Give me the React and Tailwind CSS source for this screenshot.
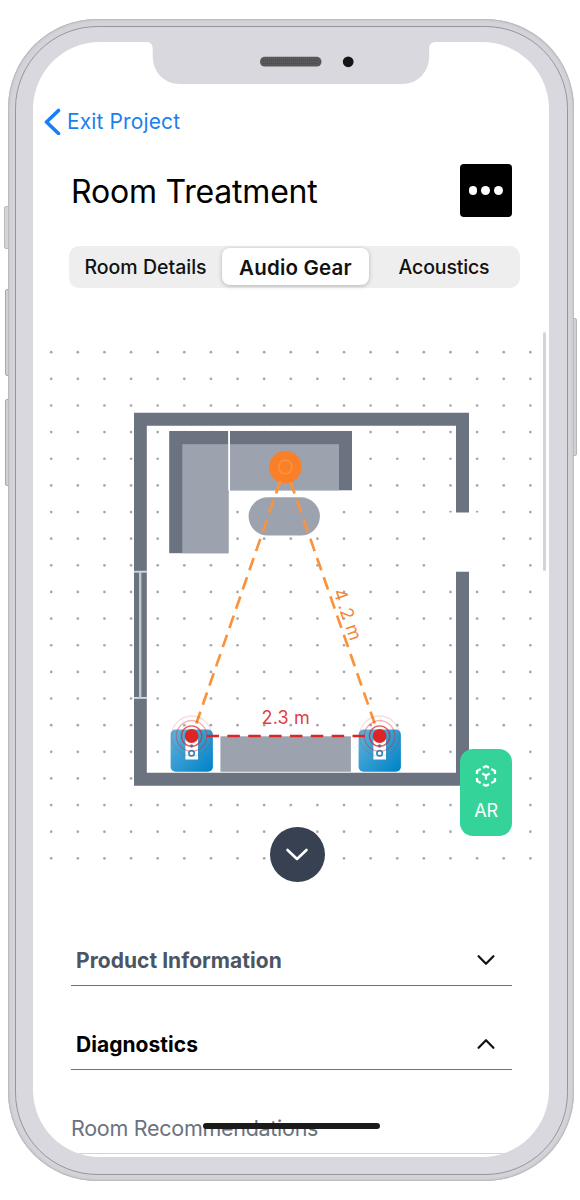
import React from "react";

const COLS = Array.from({ length: 19 }, (_, i) => 51.2 + i * 26.62);
const ROWS = Array.from({ length: 20 }, (_, i) => 352.2 + i * 26.64);

function Chevron({ up, className }) {
  return (
    <svg viewBox="0 0 18 10" className={className} fill="none" stroke="currentColor" strokeWidth="2.200" strokeLinecap="round" strokeLinejoin="round">
      <path d={up ? "M1.600 8.800 9 1.200l7.400 7.600" : "M1.600 1.200 9 8.800l7.400-7.600"} />
    </svg>
  );
}

function Notch() {
  return (
    <svg className="absolute left-[113px] top-0 h-[42px] w-[290px]" viewBox="146 42 290 42">
      <path d="M146 42C150.500 42 152.600 44 152.700 49V56C152.700 72 164 84 180 84H402C418 84 429.200 72 429.200 56V49C429.300 44 431.500 42 436 42Z" fill="#d9d8de" />
      <rect x="260" y="56.800" width="61.500" height="9.800" rx="4.900" fill="#585858" />
      <path d="M263 60.300H318M263 63.300H318" stroke="#484848" strokeWidth="1" strokeDasharray="1 1" />
      <circle cx="348.200" cy="61.800" r="5.400" fill="#151515" />
    </svg>
  );
}

function Speaker({ cx }) {
  return (
    <g>
      <rect x={cx - 21} y="729.500" width="42.300" height="42.300" rx="5" fill="url(#speaker)" />
      <rect x={cx - 6.2} y="736" width="12.600" height="23.500" fill="#fff" />
      <circle cx={cx} cy="746" r="1.700" fill="#4a90bd" />
      <circle cx={cx} cy="753.200" r="2.700" fill="none" stroke="#2b8cc9" strokeWidth="1.700" />
      <g fill="none" stroke="#dc2626">
        <circle cx={cx} cy="736" r="20" strokeOpacity=".16" strokeWidth="1.300" />
        <circle cx={cx} cy="736" r="15.300" strokeOpacity=".38" strokeWidth="1.300" />
        <circle cx={cx} cy="736" r="10.200" strokeOpacity=".75" strokeWidth="1.300" />
      </g>
      <circle cx={cx} cy="736" r="6.900" fill="#dc2626" />
    </g>
  );
}

function FloorPlan() {
  return (
    <svg className="block h-[580px] w-[516px]" viewBox="33 320 516 580">
      <defs>
        <linearGradient id="speaker" x1="0" y1="0" x2="1" y2="1">
          <stop offset=".1" stopColor="#5aaeda" />
          <stop offset=".95" stopColor="#0284c7" />
        </linearGradient>
      </defs>
      {ROWS.map((y) =>
        COLS.map((x) => <circle key={x + "-" + y} cx={x} cy={y} r="1.350" fill="#8a8a8a" fillOpacity=".75" />)
      )}
      <rect x="444" y="512.500" width="46" height="59" fill="#fff" />
      <path d="M456 512.500V425.800H146.800V772.800H456V571.700H469V785.800H134V412.700H469V512.500Z" fill="#6b7280" />
      <g fill="#d5d9df">
        <rect x="134" y="570.800" width="13" height="1.800" />
        <rect x="134" y="697" width="13" height="1.800" />
        <rect x="139" y="572" width="2.400" height="125.500" fill="#c3c7ce" />
      </g>
      <rect x="169.200" y="431" width="59.200" height="122.200" fill="#6b7280" />
      <rect x="182.300" y="444.200" width="46.100" height="109" fill="#9ca3af" />
      <rect x="228.300" y="431" width="1.700" height="59.300" fill="#fff" />
      <rect x="230" y="431" width="122" height="59.300" fill="#6b7280" />
      <rect x="230" y="444.200" width="109" height="46.100" fill="#9ca3af" />
      <rect x="248.600" y="497.300" width="71.300" height="38.300" rx="19.100" fill="#9ca3af" />
      <rect x="220.400" y="736.300" width="130.500" height="35.500" fill="#9ca3af" />
      <circle cx="285.300" cy="467" r="16.300" fill="#f98029" />
      <circle cx="285.300" cy="467" r="6.700" fill="none" stroke="#fb923c" strokeWidth="1.600" />
      <g stroke="#fb923c" strokeWidth="2.700" strokeDasharray="13 7.330">
        <path d="M280.300 481.200 196.300 723.500M290.300 481.200 374.700 723.500" />
      </g>
      <Speaker cx={191.600} />
      <Speaker cx={379.600} />
      <path d="M206.500 736H365" stroke="#dc2626" strokeWidth="2.600" strokeDasharray="12.500 8.360" />
      <text x="261.600" y="724.300" fontSize="18" fill="#dc2626" fontFamily="Inter, sans-serif" fillOpacity=".9" letterSpacing=".15">2.3 m</text>
      <text x="0 15 20.300 30 37.600" y="0" fontSize="18" fill="#f97316" fillOpacity=".9" fontFamily="Inter, sans-serif" transform="translate(333 591.300) rotate(71)">4.2 m</text>
    </svg>
  );
}

function CubeIcon() {
  return (
    <svg className="h-[22px] w-[22px]" viewBox="0 0 22 22" fill="none" stroke="#fff" strokeWidth="2.300" strokeLinejoin="round">
      <path d="M8 2.600 11 1.200l3 1.400M16.300 3.900 20 5.900v3M20 13.100v3l-3.700 2M14 19.400 11 20.800l-3-1.400M5.700 18.100 2 16.100v-3M2 8.900v-3l3.700-2M7.300 8.500 11 10.600l3.700-2.100M11 10.600v4.200" />
    </svg>
  );
}

function AccordionRow({ label, open, className }) {
  return (
    <button className={"flex w-[441px] items-center justify-between border-b border-[#6b7280] pl-[5px] pr-[17px] pt-[1px] text-[21px] font-bold tracking-[0.04px] " + className}>
      <span className="pt-[1px]">{label}</span>
      <Chevron up={open} className="h-[10px] w-[18px] text-[#111]" />
    </button>
  );
}

export default function App() {
  return (
    <div className="h-[1200px] w-[580px] overflow-hidden bg-white pl-[8px] pt-[19px] font-['Inter',sans-serif]">
      <div className="relative h-[1162px] w-[566px]">
        <div className="absolute -left-[4px] top-[187px] h-[43px] w-[5px] rounded-l-[2px] border border-[#b9b9bb] bg-[#d5d4d8]" />
        <div className="absolute -left-[3px] top-[270px] h-[87px] w-[4px] rounded-l-[2px] border border-[#a9a9ab] bg-[#d0d0d3]" />
        <div className="absolute -left-[3px] top-[380px] h-[87px] w-[4px] rounded-l-[2px] border border-[#a9a9ab] bg-[#d0d0d3]" />
        <div className="absolute -right-[3px] top-[299px] h-[138px] w-[4px] rounded-r-[2px] border border-[#b5b5b8] bg-[#d0d0d3]" />
        <div className="relative h-full w-full rounded-[89px] bg-[#d4d3d9] p-[6.500px] shadow-[inset_0_0_0_1px_#bcbcbf,inset_0_0_3px_1px_#c0c0c4]">
          <div className="h-full w-full rounded-[82.500px] border-[1.300px] border-[#95959b] bg-[#d9d8de] px-[17.500px] pb-[16.500px] pt-[15.500px]">
            <div className="relative flex h-[1115px] w-[516px] flex-col overflow-hidden rounded-[67px] bg-white">
              <Notch />
              <button className="ml-[11px] mt-[64px] flex h-[30px] items-center self-start text-[21px] tracking-[0.12px] text-[#1c7ff0]">
                <svg className="h-[27px] w-[17px]" viewBox="0 0 17 27" fill="none" stroke="#157efb" strokeWidth="3.600" strokeLinecap="round" strokeLinejoin="round">
                  <path d="M14.500 2.500 2.500 14l12 11.500" />
                </svg>
                <span className="ml-[6px] pt-[1px]">Exit Project</span>
              </button>
              <div className="ml-[38px] mt-[28px] flex h-[53px] w-[441px] items-center justify-between">
                <h1 className="pt-[3px] text-[32px] font-normal tracking-[-0.200px] text-black">Room Treatment</h1>
                <button className="flex h-[52.500px] w-[52.500px] items-center justify-center gap-[4px] rounded-[4px] bg-black">
                  <span className="h-[8.600px] w-[8.600px] rounded-full bg-white" />
                  <span className="h-[8.600px] w-[8.600px] rounded-full bg-white" />
                  <span className="h-[8.600px] w-[8.600px] rounded-full bg-white" />
                </button>
              </div>
              <div className="ml-[36px] mt-[29px] flex h-[41.600px] w-[451px] items-center rounded-[10px] bg-[#eeeeee] text-[19.500px] font-medium text-[#111]">
                <div className="w-[153px] pt-[1px] text-center">Room Details</div>
                <div className="flex h-[37px] w-[147px] items-center justify-center rounded-[8px] bg-white pt-[3px] text-[20.500px] font-semibold tracking-[0.200px] shadow-[0_1px_4px_rgba(0,0,0,0.25)]">Audio Gear</div>
                <div className="w-[150px] pt-[1px] text-center tracking-[-0.150px]">Acoustics</div>
              </div>
              <div className="relative mt-[32.400px] h-[580px] w-full">
                <FloorPlan />
                <div className="absolute left-[510px] top-[12.500px] h-[239px] w-[2.500px] rounded-full bg-[#d1d5db]" />
                <button className="absolute left-[236.500px] top-[506.800px] flex h-[55.400px] w-[55.400px] items-center justify-center rounded-full bg-[#374151] text-white">
                  <svg className="h-[14px] w-[24px]" viewBox="0 0 24 14" fill="none" stroke="currentColor" strokeWidth="2.600" strokeLinecap="round" strokeLinejoin="round">
                    <path d="M2.500 3 12 12l9.500-9" />
                  </svg>
                </button>
                <button className="absolute left-[427px] top-[429.300px] flex h-[86.700px] w-[52.300px] flex-col items-center rounded-[13px] bg-[#34d399] pt-[15.500px] text-[18px] leading-[22px] text-white">
                  <CubeIcon />
                  <span className="mt-[13px]">AR</span>
                </button>
              </div>
              <div className="flex flex-col pl-[38px]">
                <AccordionRow label="Product Information" className="mt-[34px] h-[52px] text-[#4b5563]" />
                <AccordionRow label="Diagnostics" open className="mt-[32px] h-[52px] text-black" />
                <div className="mt-[32px] flex h-[52px] w-[441px] shrink-0 items-center border-b border-[#cbd5e1] pt-[2px] text-[21.500px] tracking-[-0.280px] text-[#6b7280]">Room Recommendations</div>
              </div>
              <div className="absolute bottom-[28px] left-[169.500px] h-[6.500px] w-[177px] rounded-full bg-[#1a1a1a]" />
            </div>
          </div>
        </div>
      </div>
    </div>
  );
}
